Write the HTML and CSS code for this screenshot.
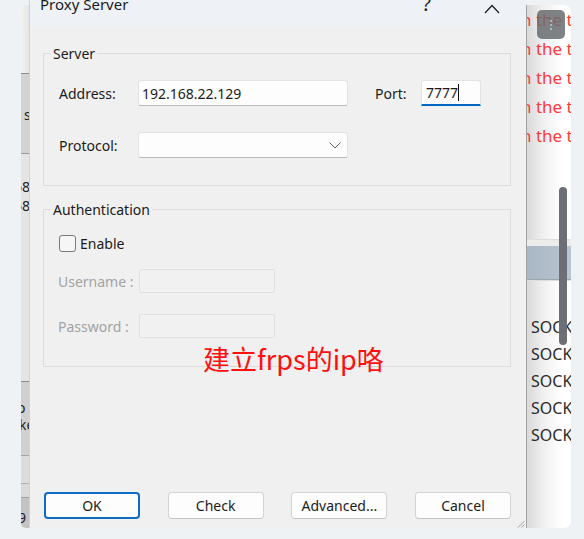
FILE: index.html
```html
<!DOCTYPE html>
<html>
<head>
<meta charset="utf-8">
<link rel="stylesheet" href="styles.css">
</head>
<body>
<div class="stage">
  <div class="strip">
    <div class="seg s1"></div>
    <div class="seg s2"><span class="frag f-s">s</span></div>
    <div class="seg s3"><span class="frag f-68">68</span><span class="frag f-68">68</span></div>
    <div class="seg s4"><span class="frag f-o">o</span><span class="frag f-ke">ke</span></div>
    <div class="seg s5"></div>
    <div class="seg s6"></div>
    <div class="seg s7"><span class="frag f-9">9</span></div>
  </div>

  <div class="dialog">
    <div class="titlebar">
      <span class="title">Proxy Server</span>
      <span class="help">?</span>
      <svg class="close" width="16" height="10" viewBox="0 0 16 10"><polyline points="1,9 8,1.5 15,9" fill="none" stroke="#1b1b1b" stroke-width="1.2"/></svg>
    </div>

    <div class="content">
      <div class="group server">
        <span class="legend">Server</span>
        <div class="row">
          <span class="label">Address:</span>
          <span class="field addr">192.168.22.129</span>
          <span class="label port-label">Port:</span>
          <span class="field port">7777<span class="caret"></span></span>
        </div>
        <div class="row row2">
          <span class="label">Protocol:</span>
          <span class="field combo"><svg width="12" height="7" viewBox="0 0 12 7"><polyline points="0.5,0.5 6,6 11.5,0.5" fill="none" stroke="#5f5f5f" stroke-width="1"/></svg></span>
        </div>
      </div>

      <div class="group auth">
        <span class="legend">Authentication</span>
        <div class="check-row">
          <span class="checkbox"></span>
          <span>Enable</span>
        </div>
        <div class="row arow first">
          <span class="label dis">Username :</span>
          <span class="field disabled"></span>
        </div>
        <div class="row arow second">
          <span class="label dis">Password :</span>
          <span class="field disabled"></span>
        </div>
      </div>
    </div>

    <div class="buttons">
      <button class="btn default">OK</button>
      <button class="btn">Check</button>
      <button class="btn">Advanced...</button>
      <button class="btn">Cancel</button>
    </div>

    <div class="note">建立frps的ip咯</div>
    <svg class="grip" width="8" height="8" viewBox="0 0 8 8"><line x1="7.5" y1="1" x2="1" y2="7.5" stroke="#9a9a9a" stroke-width="1"/><line x1="7.5" y1="4.5" x2="4.5" y2="7.5" stroke="#9a9a9a" stroke-width="1"/></svg>
  </div>

  <div class="side">
    <div class="red-lines">
      <div>n the t</div>
      <div>n the t</div>
      <div>n the t</div>
      <div>n the t</div>
      <div>n the t</div>
    </div>
    <div class="spacer1"></div>
    <div class="hline light"></div>
    <div class="band-top"></div>
    <div class="band"></div>
    <div class="hline dark"></div>
    <div class="hline light"></div>
    <div class="socks">
      <div>SOCKS</div>
      <div>SOCKS</div>
      <div>SOCKS</div>
      <div>SOCKS</div>
      <div>SOCKS</div>
    </div>
    <div class="dots-btn"><span></span><span></span><span></span></div>
    <div class="thumb"></div>
  </div>
</div>
</body>
</html>
```

FILE: styles.css
```css
* { box-sizing: border-box; }
html, body { margin: 0; padding: 0; }
body {
  width: 584px;
  height: 539px;
  overflow: hidden;
  background: #eff2f5;
  font-family: "Noto Sans", "Noto Sans CJK SC", sans-serif;
  font-size: 14px;
  color: #1b1b1b;
}
.stage {
  display: flex;
  height: 528px;
  padding-left: 21px;
}

/* left background window strip */
.strip {
  width: 8px;
  margin-top: 5px;
  display: flex;
  flex-direction: column;
  overflow: hidden;
  border-radius: 5px 0 0 5px;
  background: #e6e6e6;
}
.seg { flex: none; overflow: hidden; white-space: nowrap; display: flex; flex-direction: column; color: #222; line-height: 19px; font-size: 14px; }
.s1 { height: 68px; background: linear-gradient(to right, #f3f3f3, #e4e4e4); }
.s2 { height: 80px; background: #d3d3d3; border-top: 1px solid #8f8f8f; padding-top: 31px; }
.s3 { height: 228px; background: #e4e4e4; border-top: 1px solid #9a9a9a; padding-top: 23px; }
.s4 { height: 74px; background: #d0d0d0; border-top: 1px solid #8c8c8c; padding-top: 17px; line-height: 17px; }
.s5 { height: 28px; background: #dcdcdc; border-top: 1px solid #a4a4a4; }
.s6 { height: 14px; background: #dadada; border-top: 1px solid #b4b4b4; }
.s7 { flex: 1; background: #c3c3c3; border-top: 1px solid #a0a0a0; padding-top: 10px; }
.frag { display: block; }
.f-s { margin-left: 3px; }
.f-68 { margin-left: -7px; }
.f-o { margin-left: -4px; }
.f-ke { margin-left: -2px; }
.f-9 { margin-left: -3px; }

/* dialog */
.dialog {
  position: relative;
  width: 497px;
  display: flex;
  flex-direction: column;
  background: #f0f0f0;
  border-left: 1px solid #d2d2d2;
}
.titlebar {
  height: 27px;
  flex: none;
  display: flex;
  align-items: flex-start;
  background: #eef2f6;
  padding-left: 10px;
  overflow: hidden;
}
.title { font-size: 15px; line-height: 20px; margin-top: -6px; }
.help { margin-left: auto; font-size: 20px; line-height: 20px; margin-top: -6px; }
.close { margin-left: 53px; margin-right: 26px; margin-top: 4px; }

.content { padding: 0 15px 0 13px; }
.group {
  border: 1px solid #dcdcdc;
}
.server { margin-top: 26px; padding-bottom: 27px; }
.auth { margin-top: 23px; padding-bottom: 28px; }
.legend {
  display: block;
  width: fit-content;
  margin: -10px 0 0 7px;
  padding: 0 2px;
  line-height: 19px;
  background: #f0f0f0;
}
.row {
  display: flex;
  align-items: center;
  height: 26px;
  padding-left: 15px;
}
.server .row { margin-top: 17px; }
.server .row2 { margin-top: 26px; }
.label { width: 79px; flex: none; }
.port-label { margin-left: 27px; width: 46px; }
.field {
  display: flex;
  align-items: center;
  height: 26px;
  background: #fdfdfd;
  border: 1px solid #e3e3e3;
  border-bottom-color: #b9b9b9;
  border-radius: 3px;
  padding-left: 3px;
}
.addr { width: 210px; }
.port {
  width: 60px;
  padding-left: 4px;
  border-bottom: 2px solid #0067c0;
  border-radius: 3px 3px 0 0;
}
.caret { display: inline-block; width: 1px; height: 17px; background: #111; margin-left: 0; }
.combo { width: 210px; justify-content: flex-end; padding-right: 6px; }

.check-row {
  display: flex;
  align-items: center;
  height: 20px;
  margin-top: 14px;
  padding-left: 15px;
}
.checkbox {
  width: 17px;
  height: 17px;
  border: 1px solid #7a7a7a;
  border-radius: 3px;
  background: #f6f6f6;
  margin-right: 4px;
}
.arow { height: 24px; padding-left: 14px; }
.arow .label { width: 81px; }
.arow.first { margin-top: 16px; }
.arow.second { margin-top: 21px; }
.dis { color: #a3a3a3; }
.disabled {
  width: 136px;
  height: 24px;
  background: #f1f1f1;
  border: 1px solid #e1e1e1;
  border-radius: 2px;
}

.buttons {
  margin-top: auto;
  margin-bottom: 9px;
  display: flex;
  justify-content: space-between;
  padding: 0 15px 0 14px;
}
.btn {
  width: 96px;
  height: 27px;
  font-family: "Noto Sans", sans-serif;
  font-size: 14px;
  color: #1b1b1b;
  background: #fdfdfd;
  border: 1px solid #d3d3d3;
  border-bottom-color: #c2c2c2;
  border-radius: 4px;
  padding: 0;
}
.btn.default { border: 2px solid #0f6cc4; }

.note {
  position: absolute;
  left: 173px;
  top: 341px;
  font-family: "Noto Sans CJK SC", sans-serif;
  font-size: 27px;
  line-height: 36px;
  color: #ff0f0f;
  white-space: nowrap;
}
.grip { position: absolute; right: 1px; bottom: 0; }

/* right background window */
.side {
  position: relative;
  width: 45px;
  margin-top: 5px;
  overflow: hidden;
  border-left: 1px solid #a3a3a3;
  border-radius: 0 7px 7px 0;
  background: linear-gradient(to right, #d9d9d9, #efefef 35%, #ffffff 80%);
  white-space: nowrap;
}
.red-lines { font-size: 17px; line-height: 29px; color: #ff3a3a; margin-left: -6px; }
.spacer1 { height: 89px; }
.hline { height: 1px; }
.hline.light { background: #dedede; }
.hline.dark { background: #9ea6ae; }
.band-top { height: 6px; background: #ececec; }
.band { height: 33px; background: linear-gradient(to right, #a9b6c3, #bac6d2); }
.socks { margin-top: 33px; font-size: 16px; line-height: 27px; color: #2a2a2a; padding-left: 4px; }
.dots-btn {
  position: absolute;
  left: 10px;
  top: 5px;
  width: 28px;
  height: 29px;
  border-radius: 5px;
  background: rgba(105, 108, 112, 0.85);
  display: flex;
  flex-direction: column;
  align-items: center;
  justify-content: center;
  gap: 2px;
}
.dots-btn span { width: 2px; height: 2px; border-radius: 1px; background: #c8c8c8; }
.thumb {
  position: absolute;
  left: 32px;
  top: 182px;
  width: 8px;
  height: 158px;
  border-radius: 4px;
  background: #6c7076;
}
```
